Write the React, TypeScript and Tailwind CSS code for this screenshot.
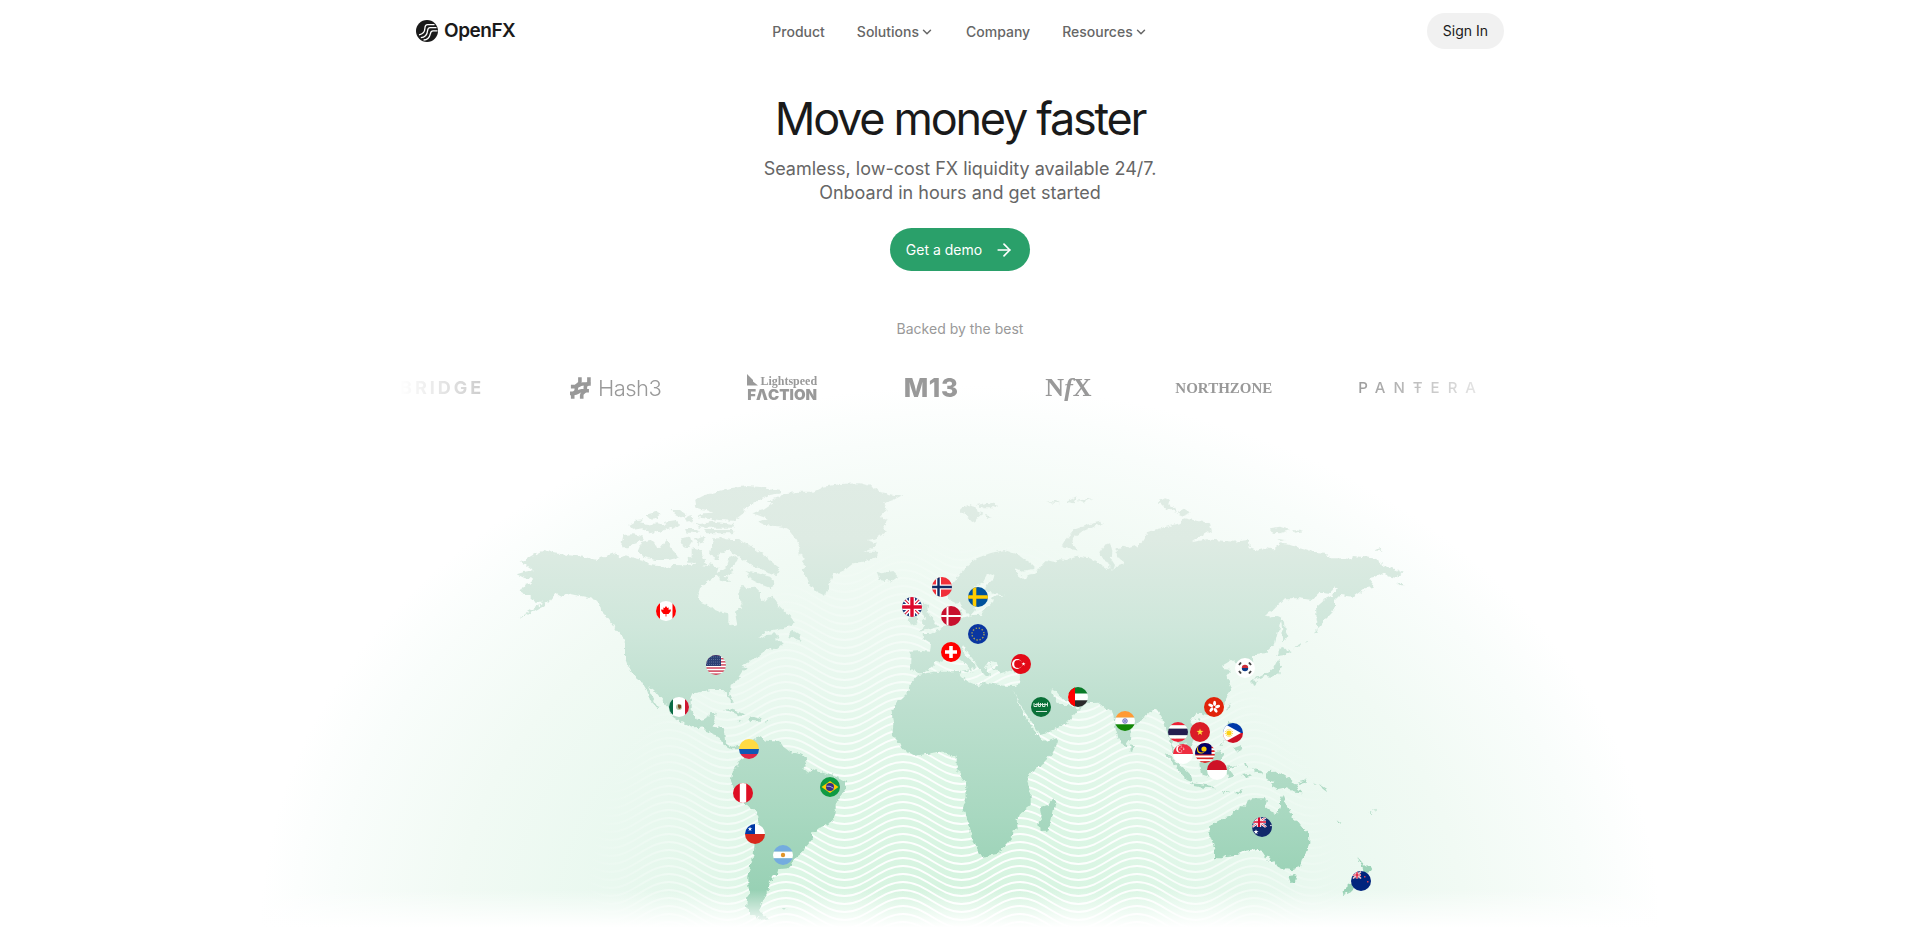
import { ArrowRight, ChevronDown } from 'lucide-react';

const LogoMark = () => (
    <svg className='h-[22px] w-[22px]' viewBox='0 0 22 22' fill='none' aria-hidden='true'>
        <circle cx='11' cy='11' r='11' fill='#1a1a1a' />
        <g stroke='#fff' strokeWidth='1.3'>
            <path d='M18.500 4.600H11.600C9.400 4.600 9 6 8.900 8.200 8.800 11.500 7.600 14 3 14.800' />
            <path d='M20.500 7.600H14C12 7.600 11.800 8.800 11.600 10.600 11.200 14.500 9 17.400 4.800 17.600' />
            <path d='M21.500 10.800H17C15 10.800 14.800 11.800 14.400 13.600 13.600 17.500 11 19.900 7.600 20' />
        </g>
    </svg>
);

const navItems = [
    { name: 'Product', menu: false },
    { name: 'Solutions', menu: true },
    { name: 'Company', menu: false },
    { name: 'Resources', menu: true },
];

const Header = () => (
    <header className='mx-auto flex h-[62px] w-full max-w-[1120px] items-center px-4'>
        <div className='flex flex-1'>
            <a href='#' className='flex items-center gap-[6px] text-[19px] leading-6 font-semibold tracking-tight text-[#1a1a1a]'>
                <LogoMark />
                OpenFX
            </a>
        </div>
        <nav className='flex items-center gap-8 pt-px text-[14px] leading-5 font-medium text-[#666]'>
            {navItems.map((item) =>
                item.menu ? (
                    <button key={item.name} className='flex items-center gap-px'>
                        {item.name}
                        <ChevronDown className='h-[14px] w-[14px]' strokeWidth={2.5} />
                    </button>
                ) : (
                    <a key={item.name} href='#'>{item.name}</a>
                )
            )}
        </nav>
        <div className='flex flex-1 justify-end'>
            <a href='#' className='rounded-full bg-[#f1f1f1] px-4 py-2 text-[14px] leading-5 text-[#1a1a1a]'>Sign In</a>
        </div>
    </header>
);

const Backers = () => (
    <div className='mx-auto mt-[35px] flex h-7 w-full max-w-[1120px] items-center justify-end gap-[86px] pr-[36px] whitespace-nowrap text-[#999] [mask-image:linear-gradient(to_right,transparent,black_15%,black_85%,transparent)]'>
        <p className='text-[18px] leading-7 font-bold tracking-[3px]'>BRIDGE</p>
        <div className='flex w-[91px] items-center gap-[7px]'>
            <svg className='h-6 w-[23px]' viewBox='0 0 23 24' fill='none' stroke='currentColor' strokeWidth='4' aria-hidden='true'>
                <path d='M11 0v5Q11 7 9 8T7 11v3Q7 16 5 17T3 20v4M21 0v5Q21 7 19 8T17 11v3Q17 16 15 17T13 20v4' />
                <path d='M1 10.500h4Q8 10.500 10 9T14 7.500h9M0 18h4Q7 18 9 16.500T13 15h8' />
            </svg>
            <p className='text-[22px] leading-7 font-light tracking-tight'>Hash3</p>
        </div>
        <div className='relative flex w-[72px] flex-col items-end'>
            <svg className='absolute top-0 left-0 h-3 w-3' viewBox='0 0 12 12' fill='currentColor' aria-hidden='true'>
                <path d='M0 0l6 6v1.500l5 4H0z' />
            </svg>
            <p className='font-["Liberation_Serif",serif] text-[12px] leading-[14px] font-bold'>Lightspeed</p>
            <p className='text-[15px] leading-[14px] font-black'>FΛCTION</p>
        </div>
        <p className='w-[58px] text-[26px] leading-7 font-extrabold tracking-wide'>M13</p>
        <p className='w-[44px] font-["Liberation_Serif",serif] text-[26px] leading-7 font-bold'>N<i>f</i>X</p>
        <p className='w-[98px] font-["Liberation_Serif",serif] text-[15px] leading-7 font-bold'>NORTHZONE</p>
        <p className='w-[127px] text-left text-[15px] leading-7 font-medium tracking-[8px]'>PANŦERA</p>
    </div>
);

/* Land outlines, grouped by the tile they were traced on */
const americasNorth = [
    // mainland with central america
    '105,283 130,270 165,280 200,285 250,290 290,300 305,290 330,285 345,280 360,292 375,285 395,292 430,300 445,312 480,316 500,326 520,315 560,316 590,312 620,318 635,310 655,325 650,340 665,330 680,320 690,290 700,285 715,295 705,310 690,325 700,335 680,345 655,345 625,362 600,385 592,410 605,430 640,445 665,455 685,460 685,485 700,500 712,495 708,475 705,455 725,440 728,430 715,415 715,390 725,378 745,382 765,380 780,395 780,415 795,425 815,405 830,430 850,450 875,475 885,490 865,500 845,505 805,512 780,530 775,538 800,522 830,520 835,530 825,540 850,545 850,550 830,560 805,565 785,580 770,590 745,605 725,620 740,625 725,640 712,660 692,675 690,700 700,725 695,730 685,710 680,700 670,690 630,690 605,695 580,700 572,720 572,750 585,775 605,782 620,778 628,760 650,758 645,780 638,800 672,805 675,845 695,860 715,855 735,855 740,868 695,868 670,855 660,835 645,825 620,815 605,800 580,802 540,785 518,770 508,745 480,712 462,690 445,677 452,700 465,725 479,745 470,742 450,720 440,690 425,665 400,645 385,620 375,595 375,550 368,530 350,510 335,490 320,470 305,455 300,435 285,420 255,410 225,405 200,400 185,410 165,400 145,425 125,440 90,460 55,478 85,455 110,440 130,425 110,425 95,420 95,405 70,405 62,395 75,375 95,370 95,355 75,355 50,343 75,335 100,330 80,315 60,305 85,295',
    '355,505 375,515 385,530 383,538 365,520',
    '875,510 885,515 900,525 905,543 890,538 862,530 870,515',
    '810,555 830,550 855,545 840,560 815,570',
    // arctic islands
    '425,245 450,240 465,255 480,265 500,240 510,260 530,285 535,295 500,300 465,300 430,290 415,270',
    '370,225 400,223 435,230 430,240 400,250 385,265 363,265 365,250',
    '540,235 570,230 575,245 565,262 550,258',
    '585,235 610,228 620,235 595,255',
    '575,265 600,270 610,290 620,315 590,315 575,290',
    '563,290 585,295 585,308 565,308',
    '640,235 670,235 690,240 720,240 740,250 770,270 800,290 820,310 840,325 830,345 805,340 780,325 760,320 740,305 725,295 700,280 690,270 670,275 655,285 660,300 645,300 630,280 635,255',
    '735,330 760,335 790,345 810,350 825,365 815,385 790,375 770,365 750,355',
    '655,345 685,350 690,365 670,365 655,355',
    '385,195 410,180 430,178 420,190 440,195 470,190 500,195 510,205 480,215 450,220 430,205 400,210',
    '435,165 470,155 485,162 470,175 445,176',
    '515,150 540,150 560,165 545,172 525,162',
    '495,185 530,180 540,195 520,207 500,198',
    '555,175 575,165 578,183 560,188',
    '580,188 600,192 640,185 680,190 705,192 700,203 650,203 600,203',
    '612,210 700,210 700,220 620,220',
    '555,207 595,207 600,218 560,218',
    '585,120 615,105 650,95 690,85 740,78 790,82 840,90 840,100 810,105 790,115 760,130 735,145 730,160 715,172 700,182 660,180 620,176 590,170 610,160 640,158 620,150 590,145',
    // greenland, iceland
    '757,160 790,150 820,130 800,125 840,110 850,100 900,95 940,95 970,80 1020,72 1080,70 1120,80 1140,95 1180,105 1208,105 1180,120 1150,130 1160,150 1140,170 1165,180 1150,200 1160,215 1130,235 1100,240 1130,250 1120,265 1090,275 1135,275 1130,290 1090,305 1060,310 1035,330 1000,345 990,365 985,385 975,407 950,395 930,375 920,350 905,330 920,320 900,305 915,295 895,280 900,260 885,235 870,215 845,200 800,195 775,185 800,175',
    '1130,335 1145,340 1180,333 1195,348 1170,365 1140,360',
];

const americasSouth = [
    '250,235 240,205 270,185 285,175 300,172 320,182 360,185 370,200 390,215 420,222 437,230 440,250 430,265 445,278 460,265 480,275 510,285 540,295 558,305 558,325 540,350 527,370 527,400 520,415 505,432 485,440 457,458 455,480 435,505 425,520 405,535 400,540 395,555 385,565 355,568 350,585 332,588 340,600 330,605 325,630 315,640 320,645 305,670 300,690 310,705 325,718 310,722 290,710 270,700 258,680 262,650 270,640 265,620 265,590 270,560 280,530 283,500 285,470 295,440 295,405 275,385 255,375 235,345 220,320 212,300 220,270 240,240',
    '190,90 210,87 235,95 262,107 240,107 215,95',
    '265,115 280,110 305,118 300,125 270,122',
    '235,122 248,124 240,127',
    '315,122 329,124 318,127',
    '365,688 383,685 372,692',
];

const oldWorld = [
    // africa, madagascar
    '175,585 190,582 220,575 260,575 300,572 305,590 325,605 360,620 368,605 400,612 440,618 470,618 458,630 470,655 490,700 515,740 535,770 560,785 590,775 594,785 580,815 550,850 510,880 502,905 512,940 512,975 480,1000 470,1020 473,1045 458,1050 455,1075 430,1105 410,1122 370,1130 355,1120 350,1100 335,1075 328,1035 320,1010 308,990 320,950 318,910 305,895 302,878 290,870 290,830 272,828 260,815 235,815 200,822 165,827 130,808 115,785 97,765 100,735 95,695 110,670 145,635 150,610',
    '580,955 586,970 572,1030 562,1052 540,1053 535,1030 545,1010 540,985 565,975',
    // eurasia
    '178,580 150,570 152,515 185,513 210,515 213,490 190,475 188,462 215,462 240,448 258,430 265,415 290,425 310,412 340,405 370,405 365,390 385,378 400,365 395,350 435,347 395,340 375,330 380,312 400,300 403,285 385,276 390,250 440,212 475,225 495,240 520,255 520,270 490,275 465,265 475,285 497,300 505,285 530,280 545,255 560,240 580,245 600,238 620,240 650,230 690,235 715,250 735,265 760,270 745,265 745,245 725,235 718,220 735,195 750,190 757,215 755,240 765,255 760,270 775,255 795,250 780,240 770,225 770,205 790,200 805,205 835,195 850,180 865,155 920,140 960,130 975,115 1000,120 1050,130 1055,150 1020,170 995,187 1040,178 1120,185 1165,180 1170,205 1190,212 1220,205 1240,208 1260,190 1290,195 1320,205 1355,215 1395,218 1410,235 1440,235 1465,240 1480,228 1540,235 1580,260 1600,265 1628,278 1610,295 1590,290 1565,280 1545,290 1525,295 1545,320 1515,325 1480,350 1440,345 1425,360 1425,375 1415,400 1395,420 1375,445 1370,420 1368,380 1390,360 1420,345 1437,320 1425,322 1410,338 1380,335 1355,360 1320,355 1275,355 1240,390 1215,405 1235,412 1250,408 1265,415 1255,450 1245,490 1215,520 1185,522 1175,530 1180,565 1160,575 1150,560 1140,560 1115,540 1085,558 1095,568 1115,570 1100,590 1115,625 1100,650 1095,670 1070,690 1045,705 1020,700 1000,710 990,725 1010,750 1000,790 985,810 975,790 960,795 950,780 945,765 935,790 940,810 955,825 975,840 960,845 940,820 930,790 925,770 915,735 905,710 890,688 870,695 855,710 830,730 812,750 810,780 795,802 775,775 765,740 760,705 755,690 735,685 715,668 680,670 655,690 630,720 600,740 560,760 540,765 515,725 490,690 470,650 455,628 475,612 480,590 478,580 450,572 430,578 400,570 390,555 405,545 385,545 375,560 390,585 380,590 365,575 345,545 325,520 312,495 305,505 320,530 345,550 350,570 335,560 340,580 325,560 305,540 290,530 265,535 245,545 230,540 215,560 190,580',
    // scandinavia
    '330,250 350,235 390,220 430,210 445,220 430,245 400,275 380,285 365,310 345,320 350,350 340,370 345,390 330,408 318,395 305,385 300,365 285,368 268,360 262,330 280,310 300,285 320,260',
    '288,395 300,388 305,405 290,420',
    // britain, ireland
    '190,370 205,375 200,395 215,410 225,430 235,440 200,450 180,455 195,440 185,425 195,415 185,395',
    '145,415 170,405 172,430 150,435',
    '305,572 330,568 328,578',
    // arctic ocean
    '300,85 325,75 345,80 350,95 370,100 355,110 345,128 330,118 310,100',
    '350,75 385,68 418,75 400,85 370,85',
    '375,105 400,110 380,115',
    '555,65 590,62 600,70',
    '620,65 650,50 640,70',
    '650,62 700,55 670,68',
    '605,200 620,175 640,150 680,135 720,125 732,130 700,140 665,155 640,175 635,190 655,212 625,206',
    '895,65 915,55 930,60 925,75 945,85 950,95 920,88',
    '950,100 975,88 992,98 970,107',
    '1230,145 1260,140 1290,150 1260,160 1235,158',
    '1300,150 1330,154 1305,158',
    '1252,177 1278,180 1262,183',
    '1543,212 1555,205 1568,212',
    '1612,310 1625,308 1634,316 1620,316',
    // sakhalin, japan, taiwan, sri lanka
    '1262,412 1275,425 1277,450 1285,465 1270,490 1267,450',
    '1262,500 1292,513 1275,525 1252,528',
    '1255,540 1265,560 1258,580 1235,590 1215,588 1195,595 1180,598 1200,585 1225,578 1240,565 1250,545',
    '1172,600 1190,603 1185,618 1175,612',
    '1300,505 1325,488 1318,500',
    '1338,486 1344,480 1342,488',
    '1362,460 1374,447 1370,458',
    '1102,680 1112,672 1108,690 1103,695',
    '1000,718 1020,714 1015,724',
    '810,790 822,800 820,815 812,815',
];

const oceania = [
    '135,282 150,288 175,312 200,335 215,350 213,365 200,360 180,335 160,310',
    '212,370 240,372 275,378 285,385 250,383 220,378',
    '305,395 328,397 310,401',
    '345,400 358,390 372,388 355,400',
    '238,310 260,300 285,275 300,270 312,285 300,300 300,340 270,350 245,345 240,325',
    '320,320 355,315 330,325 340,350 325,355 320,335',
    '325,185 340,190 345,205 330,215',
    '340,265 365,255 368,270 355,275 345,270',
    '298,260 316,238 304,258',
    '372,310 383,308 380,325',
    '365,345 385,342 400,346 380,350',
    '400,325 425,330 425,340 405,338',
    '435,350 440,337 465,335 490,345 515,360 530,380 548,400 525,398 500,385 475,390 455,380 460,365 440,360',
    '530,368 550,364 562,355 555,368 540,372',
    '580,365 590,374 584,373',
    '600,375 615,385 622,397 608,386',
    // australia, tasmania
    '272,495 300,480 335,468 340,455 355,450 360,435 378,437 385,420 400,415 440,415 440,425 435,440 455,455 472,460 480,440 480,420 487,405 495,425 510,450 515,470 535,485 550,505 567,520 568,550 555,585 545,600 540,620 520,628 500,625 485,627 470,620 462,600 445,605 450,588 438,592 425,572 405,568 375,572 350,585 320,588 305,595 285,595 285,570 275,540 268,520',
    '505,648 530,645 525,668 512,668',
    // new zealand and the pacific
    '712,590 725,605 735,618 755,622 745,638 730,638 728,620',
    '668,690 690,670 715,655 700,690 680,700 670,706',
    '650,478 668,493 656,488',
    '746,458 758,456 750,462',
    '758,450 769,446 764,451',
];

const lakes = [
    '572,628 590,635 605,655 630,665 655,672 655,690 645,685 625,675 600,675 585,655',
    '1000,712 1012,698 1024,700 1018,712 1008,722',
    '395,540 410,545 414,560 402,568 392,556',
];

const tiles = [
    { shapes: americasNorth, at: 'translate(500 460) scale(.33333)' },
    { shapes: americasSouth, at: 'translate(660 680) scale(.33333)' },
    { shapes: oldWorld, at: 'translate(860 480) scale(.33333)' },
    { shapes: oceania, at: 'translate(1120 660) scale(.33333)' },
];

const wave = (y: number) => {
    let d = `M552 ${y}`;
    for (let x = 552, down = true; x < 1400; x += 58.5, down = !down) {
        const from = down ? y : y + 22;
        const to = down ? y + 22 : y;
        d += `C${x + 22} ${from} ${x + 36.5} ${to} ${x + 58.5} ${to}`;
    }
    return d;
};
const waves = Array.from({ length: 52 }, (_, i) => wave(530 + i * 8));

const star = 'M0-3 .7-1 2.900-.9 1.100.4 1.800 2.500 0 1.200-1.800 2.500-1.100.4-2.900-.9-.7-1z';

const UnionJack = () => (
    <>
        <path d='M-10-10h20v20h-20z' fill='#1f3a7a' />
        <path d='M-10-10 10 10M10-10-10 10' stroke='#fff' strokeWidth='4' />
        <path d='M-10-10 10 10M10-10-10 10' stroke='#e0203c' strokeWidth='1.200' />
        <path d='M0-10v20M-10 0h20' stroke='#fff' strokeWidth='6' />
        <path d='M0-10v20M-10 0h20' stroke='#dc0a2d' strokeWidth='3.400' />
    </>
);

const Rows = ({ colors }: { colors: string[] }) => (
    <>
        {colors.map((c, i) => (
            <rect key={i} x='-10' y={-10 + (20 / colors.length) * i} width='20' height={20 / colors.length} fill={c} />
        ))}
    </>
);

const Nordic = ({ bg, cross, inner }: { bg: string; cross: string; inner?: string }) => (
    <>
        <path d='M-10-10h20v20h-20z' fill={bg} />
        <path d='M-3.500-10v20M-10 0h20' stroke={cross} strokeWidth={inner ? 5 : bg === '#c8102e' ? 2 : 3.6} />
        {inner && <path d='M-3.500-10v20M-10 0h20' stroke={inner} strokeWidth='2.400' />}
    </>
);

const flags = [
    { name: 'Canada', x: 666, y: 611, art: <><path d='M-10-10h20v20h-20z' fill='#fff' /><path d='M-10-10h4v20h-4zM6.500-10h4v20h-4z' fill='#f00' /><path d='M0-5l1.300 2 1.400-.6-.2 2.300L5-1.500 4.500.5 2.500 3H.4v2.500h-.8V3h-2.100L-4.500.5-5-1.500l2.500.2-.2-2.300 1.400.6z' fill='#f00' /></> },
    { name: 'United States', x: 716, y: 665, art: <><Rows colors={['#d9405a', '#fff', '#d9405a', '#fff', '#d9405a', '#fff', '#d9405a', '#fff', '#d9405a', '#fff', '#d9405a', '#fff', '#d9405a']} /><path d='M-10-10H5V1h-15z' fill='#2a3f74' /><path d='M-9-8H5M-9-5.500H5M-9-3H5M-9-.5H5' stroke='#7886aa' strokeWidth='.8' strokeDasharray='.8 1.200' /></> },
    { name: 'Mexico', x: 679, y: 707, art: <><path d='M-10-10h20v20h-20z' fill='#fff' /><path d='M-10-10h4v20h-4z' fill='#0b6b45' /><path d='M6-10h4v20H6z' fill='#ce1630' /><circle r='3' fill='#b9c2a4' /><path d='M-1-2.500 2-2v3l-2 1-1-2z' fill='#7a4a22' /></> },
    { name: 'Colombia', x: 749, y: 749, art: <Rows colors={['#ffda44', '#ffda44', '#1257b5', '#e02649']} /> },
    { name: 'Peru', x: 743, y: 793, art: <><path d='M-10-10h20v20h-20z' fill='#de0f24' /><path d='M-3.200-10h6.400v20h-6.400z' fill='#fff' /></> },
    { name: 'Brazil', x: 830, y: 787, art: <><path d='M-10-10h20v20h-20z' fill='#0f9a43' /><path d='M0-6 8.500 0 0 6-8.500 0z' fill='#fecb00' /><circle r='4' fill='#3a2f86' /><path d='M-3.500-.8Q0-1.500 3.500 1.200' stroke='#fff' strokeWidth='.6' fill='none' /></> },
    { name: 'Chile', x: 755, y: 834, art: <><Rows colors={['#fff', '#d8291c']} /><path d='M-10-10H0V0h-10z' fill='#0039a6' /><path d={star} fill='#fff' transform='translate(-5 -5) scale(.8)' /></> },
    { name: 'Argentina', x: 783, y: 855, art: <><Rows colors={['#74acdf', '#fff', '#74acdf']} /><circle r='2.200' fill='#e0952a' /></> },
    { name: 'Norway', x: 942, y: 587, art: <Nordic bg='#f0303a' cross='#fff' inner='#0f2a63' /> },
    { name: 'United Kingdom', x: 912, y: 607, art: <UnionJack /> },
    { name: 'Denmark', x: 951, y: 616, art: <Nordic bg='#c8102e' cross='#fff' /> },
    { name: 'Sweden', x: 978, y: 597, art: <Nordic bg='#00529c' cross='#ffcd00' /> },
    { name: 'European Union', x: 978, y: 634, art: <><path d='M-10-10h20v20h-20z' fill='#0a36a0' /><circle r='6' fill='none' stroke='#a59f5a' strokeWidth='1.400' strokeDasharray='1.400 1.740' /></> },
    { name: 'Switzerland', x: 951, y: 652, art: <><path d='M-10-10h20v20h-20z' fill='#f00' /><path d='M0-6V6M-6 0H6' stroke='#fff' strokeWidth='3.600' /></> },
    { name: 'Turkey', x: 1021, y: 664, art: <><path d='M-10-10h20v20h-20z' fill='#e30a17' /><circle cx='-4' r='5' fill='#fff' /><circle cx='-2.800' r='4' fill='#e30a17' /><path d={star} fill='#fff' transform='translate(2.500 0) scale(.7)' /></> },
    { name: 'Saudi Arabia', x: 1041, y: 707, art: <><path d='M-10-10h20v20h-20z' fill='#0a7038' /><path d='M-7-4v3.500h3V-4M-2.500-4.500V-.5h2V-4M1.500-4v3.500h2.500V-4M6.500-4.500v4M-6-2.500h12' stroke='#d6e8dc' strokeWidth='1' fill='none' /><path d='M-5 4.500H6' stroke='#fff' strokeWidth='.8' /></> },
    { name: 'United Arab Emirates', x: 1078, y: 697, art: <><Rows colors={['#0a7a28', '#fff', '#2a2a2a']} /><path d='M-10-10h7v20h-7z' fill='#f00' /></> },
    { name: 'India', x: 1125, y: 721, art: <><Rows colors={['#ff9a35', '#fff', '#138808']} /><circle r='2.300' fill='#c9c9ea' stroke='#4b4bb0' strokeWidth='.7' /><circle r='.8' fill='#4b4bb0' /></> },
    { name: 'South Korea', x: 1245, y: 668, art: <><path d='M-10-10h20v20h-20z' fill='#fff' /><path d='M-3.200 0a3.200 3.200 0 0 1 6.400 0z' fill='#cd2e3a' /><path d='M-3.200 0a3.200 3.200 0 0 0 6.400 0z' fill='#0f3a86' /><path d='M-6-3l2-2.500M6-3l-2-2.500M-6 3l2 2.500M6 3l-2 2.500' stroke='#444' strokeWidth='2' /></> },
    { name: 'Hong Kong', x: 1214, y: 707, art: <><path d='M-10-10h20v20h-20z' fill='#e1240a' />{[0, 72, 144, 216, 288].map((a) => <ellipse key={a} cx='.6' cy='-3.600' rx='1.500' ry='2.600' fill='#fff' transform={`rotate(${a})`} />)}</> },
    { name: 'Philippines', x: 1233, y: 733, art: <><Rows colors={['#0038a8', '#ce1126']} /><path d='M-10-10 8 0-10 10z' fill='#fff' /><circle cx='-4' r='2.600' fill='#fcd116' /><circle cx='-4' r='3.600' fill='none' stroke='#fcd116' strokeWidth='1' strokeDasharray='1 1' /></> },
    { name: 'Singapore', x: 1183, y: 754, art: <><Rows colors={['#ee2d40', '#fff']} /><circle cx='-3' cy='-5' r='3.800' fill='#fff' /><circle cx='-1.600' cy='-5' r='3.500' fill='#ee2d40' /><circle cx='-1.200' cy='-5' r='2' fill='none' stroke='#fff' strokeWidth='1' strokeDasharray='1 1.500' /></> },
    { name: 'Vietnam', x: 1200, y: 732, art: <><path d='M-10-10h20v20h-20z' fill='#da1c27' /><path d={star} fill='#ffe03a' transform='scale(1.200)' /></> },
    { name: 'Thailand', x: 1178, y: 732, art: <Rows colors={['#ee2035', '#fff', '#241d4f', '#241d4f', '#fff', '#ee2035']} /> },
    { name: 'Malaysia', x: 1205, y: 753, art: <><Rows colors={['#d22', '#fff', '#d22', '#fff', '#d22', '#fff', '#d22', '#fff', '#d22', '#fff', '#d22']} /><path d='M-10-10H6.500V1.500H-10z' fill='#010066' /><circle cx='-4' cy='-3.500' r='4' fill='#fc0' /><circle cx='-3' cy='-4.500' r='4' fill='#010066' /><circle cx='-1' cy='-4' r='2.600' fill='#fc0' /></> },
    { name: 'Indonesia', x: 1217, y: 770, art: <Rows colors={['#ce1126', '#fff']} /> },
    { name: 'Australia', x: 1262, y: 827, art: <><path d='M-10-10h20v20h-20z' fill='#12296b' /><g transform='translate(-3 -5) scale(.7 .5)'><UnionJack /></g><path d={star} fill='#fff' transform='translate(-6 5) scale(.9)' /><circle cx='9' cy='-1.500' r='.8' fill='#fff' /></> },
    { name: 'New Zealand', x: 1361, y: 881, art: <><path d='M-10-10h20v20h-20z' fill='#00247d' /><g transform='translate(-4 -6) scale(.4 .35)'><UnionJack /></g><path d='M3-5h1.500v1.500H3zM6 0h1.500v1.500H6z' fill='#d0405a' /></> },
];

const WorldMap = () => (
    <svg className='block w-full overflow-visible' viewBox='0 402 1920 545' role='img' aria-label='World map of supported currencies'>
        <defs>
            <radialGradient id='glow' gradientUnits='userSpaceOnUse' cx='0' cy='0' r='1' gradientTransform='translate(960 930) scale(700 545)'>
                <stop offset='0' stopColor='#d4f3de' />
                <stop offset='.25' stopColor='#dcf6e5' />
                <stop offset='.5' stopColor='#e9f8ef' />
                <stop offset='.72' stopColor='#f1faf4' />
                <stop offset='.9' stopColor='#f9fdfb' />
                <stop offset='1' stopColor='#fff' />
            </radialGradient>
            <radialGradient id='waveFade' gradientUnits='userSpaceOnUse' cx='0' cy='0' r='1' gradientTransform='translate(965 930) scale(385 400)'>
                <stop offset='0' stopColor='#fff' />
                <stop offset='.5' stopColor='#fff' stopOpacity='.9' />
                <stop offset='1' stopColor='#fff' stopOpacity='0' />
            </radialGradient>
            <linearGradient id='landFill' gradientUnits='userSpaceOnUse' x1='0' y1='480' x2='0' y2='900'>
                <stop offset='0' stopColor='#e0ece5' />
                <stop offset='.14' stopColor='#deebe3' />
                <stop offset='.35' stopColor='#cfe7db' />
                <stop offset='.55' stopColor='#bcdfce' />
                <stop offset='.8' stopColor='#a8d8c0' />
                <stop offset='1' stopColor='#96d0b3' />
            </linearGradient>
            <linearGradient id='bottomFade' x1='0' y1='0' x2='0' y2='1'>
                <stop offset='0' stopColor='#fff' stopOpacity='0' />
                <stop offset='.75' stopColor='#fff' />
            </linearGradient>
            <filter id='coast' filterUnits='userSpaceOnUse' x='480' y='460' width='960' height='480'>
                <feTurbulence type='fractalNoise' baseFrequency='.22' numOctaves='2' seed='4' />
                <feDisplacementMap in='SourceGraphic' scale='5' xChannelSelector='R' yChannelSelector='G' />
            </filter>
            <mask id='land' maskUnits='userSpaceOnUse' x='480' y='460' width='960' height='487'>
                <g filter='url(#coast)'>
                    {tiles.map((tile) => (
                        <g key={tile.at} transform={tile.at} fill='#fff'>
                            {tile.shapes.map((points) => <polygon key={points} points={points} />)}
                        </g>
                    ))}
                    <g transform='translate(860 480) scale(.33333)' fill='#000'>
                        {lakes.map((points) => <polygon key={points} points={points} />)}
                    </g>
                </g>
            </mask>
            <clipPath id='round'>
                <circle r='10' />
            </clipPath>
        </defs>
        <ellipse cx='960' cy='930' rx='700' ry='545' fill='url(#glow)' />
        <g fill='none' stroke='url(#waveFade)' strokeWidth='2'>
            {waves.map((d) => <path key={d} d={d} />)}
        </g>
        <rect x='480' y='460' width='960' height='487' fill='url(#landFill)' mask='url(#land)' />
        <rect x='200' y='890' width='1520' height='50' fill='url(#bottomFade)' />
        <rect x='200' y='939' width='1520' height='700' fill='#fff' />
        {flags.map((flag) => (
            <g key={flag.name} transform={`translate(${flag.x} ${flag.y})`} clipPath='url(#round)'>
                {flag.art}
            </g>
        ))}
    </svg>
);

export default function App() {
    return (
        <div className='overflow-hidden bg-white font-[Inter,sans-serif]'>
            <div className='relative z-10'>
                <Header />
                <main className='flex flex-col items-center pt-[29px] text-center'>
                    <h1 className='text-[45px] leading-[56px] tracking-tighter text-[#1a1a1a]'>Move money faster</h1>
                    <p className='mt-[10px] text-[18px] leading-6 text-[#666]'>
                        Seamless, low-cost FX liquidity available 24/7.
                        <br />
                        Onboard in hours and get started
                    </p>
                    <a href='#' className='mt-[23px] flex h-[43px] items-center gap-3 rounded-full bg-[#2aa06a] px-4 text-[14px] leading-5 text-white'>
                        Get a demo
                        <ArrowRight className='h-5 w-5' strokeWidth={2} />
                    </a>
                    <p className='mt-12 text-[14px] leading-5 text-[#999]'>Backed by the best</p>
                    <Backers />
                </main>
            </div>
            <WorldMap />
        </div>
    );
}
